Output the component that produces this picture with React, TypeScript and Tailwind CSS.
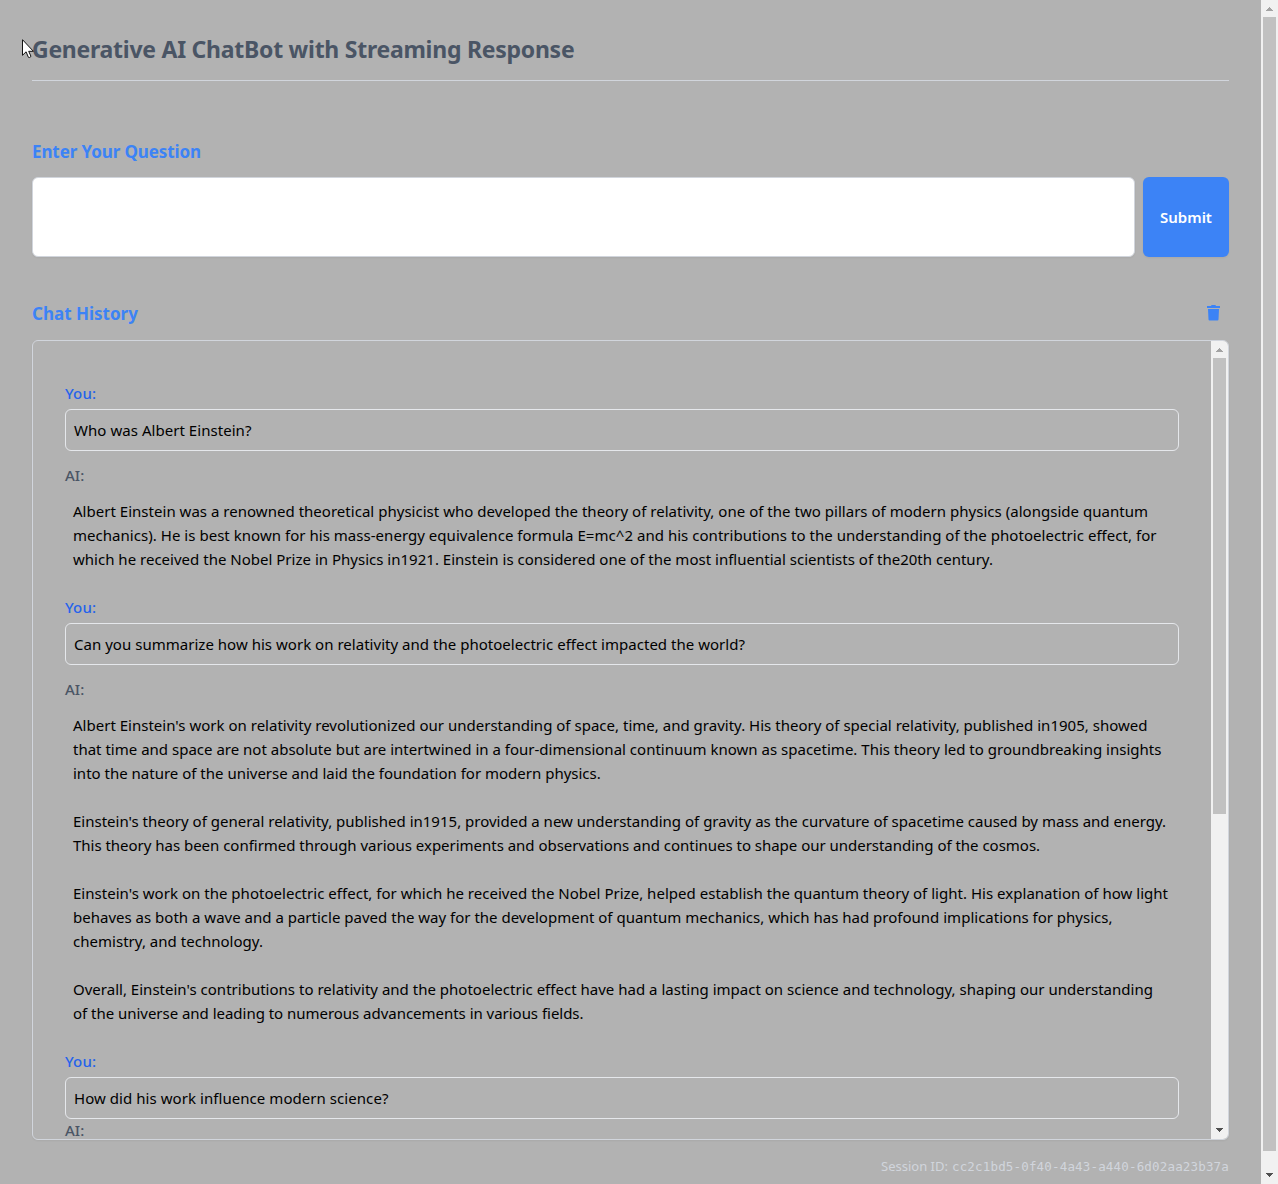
type TextLine = { text: string; tracking?: string };
type Exchange = { question: TextLine; answer: TextLine[][] };

const exchanges: Exchange[] = [
  {
    question: { text: "Who was Albert Einstein?", tracking: "tracking-[0.049px]" },
    answer: [
      [
        {
          text: "Albert Einstein was a renowned theoretical physicist who developed the theory of relativity, one of the two pillars of modern physics (alongside quantum",
          tracking: "tracking-[0.024px]",
        },
        {
          text: "mechanics). He is best known for his mass-energy equivalence formula E=mc^2 and his contributions to the understanding of the photoelectric effect, for",
          tracking: "tracking-[0.035px]",
        },
        {
          text: "which he received the Nobel Prize in Physics in1921. Einstein is considered one of the most influential scientists of the20th century.",
          tracking: "tracking-[0.01px]",
        },
      ],
    ],
  },
  {
    question: {
      text: "Can you summarize how his work on relativity and the photoelectric effect impacted the world?",
      tracking: "tracking-[0.026px]",
    },
    answer: [
      [
        {
          text: "Albert Einstein's work on relativity revolutionized our understanding of space, time, and gravity. His theory of special relativity, published in1905, showed",
          tracking: "tracking-[0.012px]",
        },
        {
          text: "that time and space are not absolute but are intertwined in a four-dimensional continuum known as spacetime. This theory led to groundbreaking insights",
          tracking: "tracking-[0.006px]",
        },
        { text: "into the nature of the universe and laid the foundation for modern physics." },
      ],
      [
        {
          text: "Einstein's theory of general relativity, published in1915, provided a new understanding of gravity as the curvature of spacetime caused by mass and energy.",
          tracking: "tracking-[0.004px]",
        },
        {
          text: "This theory has been confirmed through various experiments and observations and continues to shape our understanding of the cosmos.",
          tracking: "tracking-[-0.021px]",
        },
      ],
      [
        {
          text: "Einstein's work on the photoelectric effect, for which he received the Nobel Prize, helped establish the quantum theory of light. His explanation of how light",
          tracking: "tracking-[0.024px]",
        },
        {
          text: "behaves as both a wave and a particle paved the way for the development of quantum mechanics, which has had profound implications for physics,",
          tracking: "tracking-[0.006px]",
        },
        { text: "chemistry, and technology.", tracking: "tracking-[0.025px]" },
      ],
      [
        {
          text: "Overall, Einstein's contributions to relativity and the photoelectric effect have had a lasting impact on science and technology, shaping our understanding",
          tracking: "tracking-[0.012px]",
        },
        {
          text: "of the universe and leading to numerous advancements in various fields.",
          tracking: "tracking-[-0.027px]",
        },
      ],
    ],
  },
  {
    question: { text: "How did his work influence modern science?", tracking: "tracking-[0.058px]" },
    answer: [],
  },
];

function Arrow({ down = false, color }: { down?: boolean; color: string }) {
  return (
    <svg
      viewBox="0 0 17 17"
      className={down ? "h-[17px] w-[17px] shrink-0 rotate-180" : "h-[17px] w-[17px] shrink-0"}
      shapeRendering="crispEdges"
    >
      <path d="M8 7h1v1h1v1h1v1h1v1H5v-1h1V9h1V8h1z" fill={color} />
    </svg>
  );
}

function Scrollbar({ thumb }: { thumb: string }) {
  return (
    <div className="flex w-[17px] shrink-0 flex-col bg-[#f1f1f1]">
      <Arrow color="#a3a3a3" />
      <div className="min-h-0 flex-1 px-0.5">
        <div className={`bg-[#c1c1c1] ${thumb}`} />
      </div>
      <Arrow down color="#505050" />
    </div>
  );
}

function Message({ question, answer }: Exchange) {
  return (
    <div className="mb-4">
      <div className="font-medium tracking-[0.1px] text-[#2563eb]">You:</div>
      <div className="mt-1 mb-3 rounded-md border border-gray-200 p-2 text-black">
        <p className={`whitespace-nowrap ${question.tracking ?? ""}`}>{question.text}</p>
      </div>
      <div className={`font-medium text-gray-600 ${answer.length ? "" : "-mt-[13px]"}`}>AI:</div>
      <div className="mt-1 space-y-6 p-2 whitespace-nowrap text-black">
        {answer.map((paragraph, i) => (
          <p key={i}>
            {paragraph.map((line) => (
              <span key={line.text} className={`block ${line.tracking ?? ""}`}>
                {line.text}
              </span>
            ))}
          </p>
        ))}
      </div>
    </div>
  );
}

export default function App() {
  return (
    <div className="relative flex h-[1184px] w-[1278px] overflow-hidden bg-[#b2b2b2] font-['Noto_Sans',sans-serif] text-[15px] leading-6">
      <main className="min-w-0 flex-1 px-8 pt-8">
        <header className="border-b border-gray-300 pt-px pb-[15px]">
          <h1 className="text-[23px] leading-8 font-bold tracking-[-0.26px] text-gray-600">
            Generative AI ChatBot with Streaming Response
          </h1>
        </header>

        <section className="mt-[57px]">
          <h2 className="text-[17px] leading-7 font-bold tracking-[-0.1px] text-[#3c83f6]">
            Enter Your Question
          </h2>
          <div className="mt-[11px] flex h-20 gap-2">
            <textarea className="block h-20 min-w-0 flex-1 resize-none rounded-md border border-gray-300 bg-white p-2 shadow-xs outline-none" />
            <button className="w-[86px] rounded-md bg-[#3c83f6] font-semibold text-white shadow-xs">
              Submit
            </button>
          </div>
        </section>

        <section className="mt-[43px]">
          <div className="flex h-7 items-center justify-between pr-2">
            <h2 className="text-[17px] leading-7 font-bold text-[#3c83f6]">Chat History</h2>
            <button aria-label="Clear chat history" className="pb-0.5">
              <svg viewBox="0 0 15 16" className="block h-4 w-[15px]" fill="#3c83f6">
                <path d="M1 1h4l.6-1h3.8l.6 1h4v2H1zM2 4h11l-.5 10.6q-.1 1-1 1h-8q-.9 0-1-1z" />
              </svg>
            </button>
          </div>
          <div className="mt-3 flex h-[800px] overflow-hidden rounded-md border border-gray-300 shadow-xs">
            <div className="min-w-0 flex-1 overflow-hidden px-8 pt-10">
              {exchanges.map((exchange) => (
                <Message key={exchange.question.text} {...exchange} />
              ))}
            </div>
            <Scrollbar thumb="h-[456px]" />
          </div>
        </section>

        <footer className="mt-4 flex justify-end gap-1 text-[13px] leading-5 text-gray-300">
          <span>Session ID:</span>
          <span className="pt-px font-['DejaVu_Sans_Mono',monospace] text-[12.5px] tracking-[0.17px]">
            cc2c1bd5-0f40-4a43-a440-6d02aa23b37a
          </span>
        </footer>
      </main>

      <Scrollbar thumb="h-[1134px]" />

      <svg viewBox="0 0 12 20" className="absolute top-[39px] left-[22px] h-5 w-3">
        <path
          d="M.5.7v15.6l3.6-3.5 2.3 5.5q1.2.8 2.6-.9l-2.3-5.1h4.7z"
          fill="#fff"
          stroke="#111"
          strokeWidth="1"
        />
      </svg>
    </div>
  );
}
